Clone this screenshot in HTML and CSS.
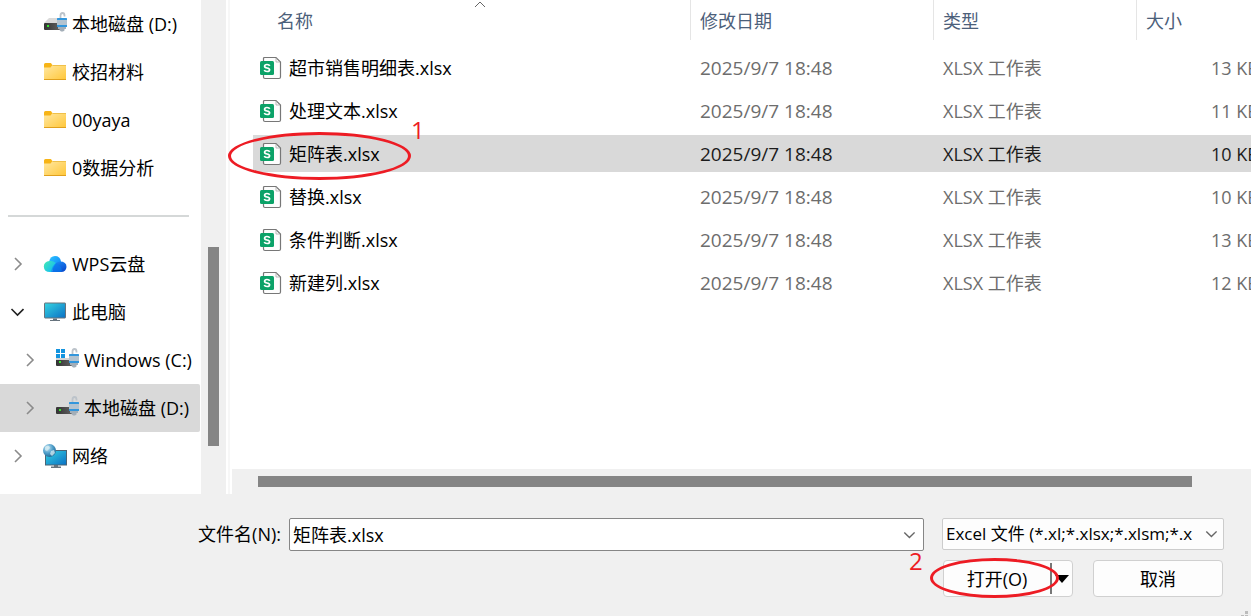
FILE: index.html
```html
<!DOCTYPE html>
<html lang="zh-CN">
<head>
<meta charset="utf-8">
<title>打开文件</title>
<link rel="stylesheet" href="styles.css">
</head>
<body>
<svg class="defs" aria-hidden="true">
  <defs>
    <linearGradient id="g-folder" x1="0" y1="0" x2="1" y2="1"><stop offset="0" stop-color="#ffe8a3"/><stop offset="1" stop-color="#ffc73a"/></linearGradient>
    <linearGradient id="g-screen" x1="0" y1="0" x2="1" y2="1"><stop offset="0" stop-color="#36d5e2"/><stop offset="1" stop-color="#0a6fc4"/></linearGradient>
    <linearGradient id="g-cloud-l" x1="0" y1="0.2" x2="1" y2="1"><stop offset="0" stop-color="#3fe6b8"/><stop offset="1" stop-color="#0ab4ff"/></linearGradient>
    <linearGradient id="g-cloud-t" x1="0" y1="0" x2="1" y2="1"><stop offset="0" stop-color="#2cc4ff"/><stop offset="1" stop-color="#0a7cf5"/></linearGradient>
    <linearGradient id="g-cloud-r" x1="0.2" y1="0" x2="0.8" y2="1"><stop offset="0" stop-color="#1d8cf8"/><stop offset="1" stop-color="#0848cc"/></linearGradient>
    <linearGradient id="g-drive" x1="0" y1="0" x2="1" y2="0"><stop offset="0" stop-color="#333"/><stop offset="1" stop-color="#666"/></linearGradient>
    <radialGradient id="g-globe" cx="0.35" cy="0.3" r="0.75"><stop offset="0" stop-color="#c9e9f5"/><stop offset="0.55" stop-color="#4d9dc9"/><stop offset="1" stop-color="#22648f"/></radialGradient>
    <symbol id="folder" viewBox="0 0 24 24">
      <path d="M1 4.500Q1 3 2.500 3H7.500Q8.500 3 8.500 4L9.500 5V8H1Z" fill="#f7b416"/>
      <path d="M1 7.500H7.500L9.500 5H23V19.500H1Z" fill="url(#g-folder)"/>
      <path d="M1 19.500H23" stroke="#e0a01d"/><path d="M9.500 5.500H23" stroke="#efc04a"/>
    </symbol>
    <symbol id="lock" viewBox="0 0 24 24">
      <path d="M17.500 7V3.500Q17.500 1 19.500 1Q21.500 1 21.500 3.500V4.500" fill="none" stroke="#bcc3ca" stroke-width="1.800"/>
      <path d="M15 14H23V17H21.500V18.500L20 19.500H18L16.500 18V17H15Z" fill="#a3aeb8"/>
      <rect x="14" y="6" width="10" height="9" rx=".5" fill="#3296dc"/>
      <rect x="14" y="8" width="10" height="5" fill="#b3c3d0"/>
    </symbol>
    <symbol id="drive" viewBox="0 0 24 24">
      <path d="M6 6H17L20 11H1Z" fill="#dadada"/>
      <rect x="1" y="11" width="18" height="7" rx="1" fill="url(#g-drive)"/>
      <rect x="4" y="13" width="2" height="2" fill="#35e52c"/>
      <use href="#lock"/>
    </symbol>
    <symbol id="windrive" viewBox="0 0 24 24">
      <rect x="1" y="11" width="18" height="7" rx="1" fill="url(#g-drive)"/>
      <rect x="1" y="10" width="18" height="2" fill="#d3d3d3"/>
      <rect x="4" y="13" width="2" height="2" fill="#35e52c"/>
      <path d="M1 1H5V5H1ZM6 1H10V5H6ZM1 6H5V10H1ZM6 6H10V10H6Z" fill="#1394df"/>
      <use href="#lock"/>
    </symbol>
    <symbol id="cloud" viewBox="0 0 24 24">
      <path d="M6 10Q7 4 12 4Q17 4 18 9.500L15 18H7Z" fill="url(#g-cloud-t)"/>
      <path d="M9 20Q11 10 17 9.500Q23.500 9.500 23.500 15Q23 20 18 20Z" fill="url(#g-cloud-r)"/>
      <path d="M6.500 9Q10 8.500 13 11Q9.500 15 9 20H7Q1 20 .8 14.500Q1 9.500 6.500 9Z" fill="url(#g-cloud-l)"/>
      <path d="M13 11L18 15Q20 20 17 20H8Q9 14 13 11Z" fill="#087df2" opacity=".6"/>
    </symbol>
    <symbol id="pc" viewBox="0 0 24 24">
      <rect x="1.500" y="3" width="21" height="15" rx=".5" fill="url(#g-screen)" stroke="#69727b"/>
      <path d="M10 18.500H14V20H10ZM7 20H17V21H7Z" fill="#66737d"/>
    </symbol>
    <symbol id="network" viewBox="0 0 24 24">
      <rect x="2.500" y="6.500" width="21" height="14.500" fill="url(#g-screen)" stroke="#4b6474"/>
      <path d="M11 21H15V23H11ZM8 22.500H18V24H8Z" fill="#66737d"/>
      <circle cx="6.500" cy="6.500" r="6.500" fill="url(#g-globe)"/>
      <path d="M2 3Q4 1 6 2L7 4L4 7L2 6ZM8 7L11 6L12 9L9 12L7 10Z" fill="#d8eef3" opacity=".75"/>
    </symbol>
    <symbol id="sheet" viewBox="0 0 22 24">
      <path d="M3.500 3V2.500Q3.500 1.500 4.500 1.500H16L20.500 6V21Q20.500 22.500 19 22.500H5Q3.500 22.500 3.500 21Z" fill="#fdfdfd" stroke="#777" stroke-width="1.200"/>
      <path d="M16 2V6H20" fill="none" stroke="#aaa" stroke-width=".8"/>
      <rect y="5" width="14" height="14" rx="1.500" fill="#0ba268"/>
      <path d="M9.700 9.900Q9.200 8.500 7 8.500Q4.600 8.500 4.600 10.200Q4.600 11.600 7 12Q9.600 12.400 9.600 13.800Q9.600 15.500 7.100 15.500Q4.800 15.500 4.300 14" fill="none" stroke="#fff" stroke-width="1.700"/>
    </symbol>
    <symbol id="right" viewBox="0 0 14 14"><path d="M5 1L11 7L5 13" fill="none" stroke="#8b8b8b" stroke-width="1.600"/></symbol>
    <symbol id="down" viewBox="0 0 14 14"><path d="M1.500 4L7.500 10L13.500 4" fill="none" stroke="currentColor" stroke-width="1.600"/></symbol>
  </defs>
</svg>

<div class="dialog">
  <div class="browser">
    <nav class="sidebar" aria-label="位置">
      <a class="place" href="#"><span class="twist"></span><svg class="icon"><use href="#drive"/></svg>本地磁盘 (D:)</a>
      <a class="place" href="#"><span class="twist"></span><svg class="icon"><use href="#folder"/></svg>校招材料</a>
      <a class="place" href="#"><span class="twist"></span><svg class="icon"><use href="#folder"/></svg>00yaya</a>
      <a class="place" href="#"><span class="twist"></span><svg class="icon"><use href="#folder"/></svg>0数据分析</a>
      <hr class="divider">
      <a class="place" href="#"><svg class="twist"><use href="#right"/></svg><svg class="icon"><use href="#cloud"/></svg>WPS云盘</a>
      <a class="place" href="#"><svg class="twist"><use href="#down"/></svg><svg class="icon"><use href="#pc"/></svg>此电脑</a>
      <a class="place child" href="#"><svg class="twist"><use href="#right"/></svg><svg class="icon"><use href="#windrive"/></svg>Windows (C:)</a>
      <a class="place child current" href="#"><svg class="twist"><use href="#right"/></svg><svg class="icon"><use href="#drive"/></svg>本地磁盘 (D:)</a>
      <a class="place" href="#"><svg class="twist"><use href="#right"/></svg><svg class="icon"><use href="#network"/></svg>网络</a>
    </nav>
    <div class="vscroll"><div class="vthumb"></div></div>
    <div class="splitter"></div>
    <main class="files">
      <table class="list">
        <colgroup><col><col class="c-date"><col class="c-type"><col class="c-size"></colgroup>
        <thead>
          <tr>
            <th><div class="head first">名称<svg class="sort" viewBox="0 0 14 8"><path d="M2 7L7 2L12 7" fill="none" stroke="#666"/></svg></div></th>
            <th><div class="head">修改日期</div></th>
            <th><div class="head">类型</div></th>
            <th><div class="head">大小</div></th>
          </tr>
        </thead>
        <tbody>
          <tr><td class="name"><div class="file"><svg class="sheet"><use href="#sheet"/></svg>超市销售明细表.xlsx</div></td><td class="date">2025/9/7 18:48</td><td>XLSX 工作表</td><td class="size">13 KB</td></tr>
          <tr><td class="name"><div class="file"><svg class="sheet"><use href="#sheet"/></svg>处理文本.xlsx</div></td><td class="date">2025/9/7 18:48</td><td>XLSX 工作表</td><td class="size">11 KB</td></tr>
          <tr class="selected"><td class="name"><div class="file"><svg class="sheet"><use href="#sheet"/></svg>矩阵表.xlsx<span class="ring ring-file"></span><span class="step step-file">1</span></div></td><td class="date">2025/9/7 18:48</td><td>XLSX 工作表</td><td class="size">10 KB</td></tr>
          <tr><td class="name"><div class="file"><svg class="sheet"><use href="#sheet"/></svg>替换.xlsx</div></td><td class="date">2025/9/7 18:48</td><td>XLSX 工作表</td><td class="size">10 KB</td></tr>
          <tr><td class="name"><div class="file"><svg class="sheet"><use href="#sheet"/></svg>条件判断.xlsx</div></td><td class="date">2025/9/7 18:48</td><td>XLSX 工作表</td><td class="size">13 KB</td></tr>
          <tr><td class="name"><div class="file"><svg class="sheet"><use href="#sheet"/></svg>新建列.xlsx</div></td><td class="date">2025/9/7 18:48</td><td>XLSX 工作表</td><td class="size">12 KB</td></tr>
        </tbody>
      </table>
      <div class="hscroll"><div class="hthumb"></div></div>
    </main>
  </div>

  <form class="footer">
    <div class="row">
      <label class="label" for="filename">文件名(N):</label>
      <div class="combo">
        <input id="filename" type="text" value="矩阵表.xlsx">
        <button class="drop" type="button" aria-label="展开"><svg class="chev"><use href="#down"/></svg></button>
      </div>
      <div class="filter">
        <select aria-label="文件类型"><option>Excel 文件 (*.xl;*.xlsx;*.xlsm;*.x</option></select>
        <svg class="chev"><use href="#down"/></svg>
      </div>
    </div>
    <div class="row actions">
      <div class="split">
        <button class="open" type="button">打开(O)</button>
        <button class="more" type="button" aria-label="更多打开方式"><svg class="tri" viewBox="0 0 14 8"><path d="M0 0H14L7 8Z"/></svg></button>
        <span class="ring ring-open"></span><span class="step step-open">2</span>
      </div>
      <button class="cancel" type="button">取消</button>
    </div>
    <svg class="grip" viewBox="0 0 10 6"><path d="M4 1H7V4H4ZM0 5H3V6H0ZM4 5H7V6H4Z" fill="#bcbcbc"/></svg>
  </form>
</div>
</body>
</html>
```
FILE: styles.css
```css
* { box-sizing: border-box; }
html { overflow: hidden; }
body {
  margin: 0;
  background: #f0f0f0;
  color: #000;
  font: 18px/24px "Open Sans", "Noto Sans CJK SC", sans-serif;
}
input, select, button { font: inherit; color: inherit; margin: 0; }
.defs { position: absolute; width: 0; height: 0; }

.dialog { min-height: 100vh; display: flex; flex-direction: column; position: relative; overflow: hidden; }
.browser { display: flex; background: #fff; }

.sidebar { width: 201px; flex: none; padding-bottom: 14px; }
.place {
  display: flex;
  align-items: center;
  height: 48px;
  margin-right: 1px;
  padding-left: 10px;
  color: #000;
  text-decoration: none;
  white-space: nowrap;
}
.place.child { padding-left: 22px; }
.current { background: #d9d9d9; border-radius: 0 2px 2px 0; }
.twist { width: 14px; height: 14px; margin-right: 19px; flex: none; color: #222; }
.icon { width: 24px; height: 24px; margin-right: 5px; flex: none; }
.divider { height: 2px; margin: 23px 12px 23px 8px; border: 0; background: #d5d8d8; }

.vscroll { width: 25px; flex: none; padding: 247px 7px 48px; background: #f0f0f0; }
.vthumb { height: 100%; background: #858585; }
.splitter { width: 6px; flex: none; border: solid #fff; border-width: 0 2px; background: #f7f7f7; }

.files { flex: 1; min-width: 0; display: flex; flex-direction: column; justify-content: space-between; }
.list {
  width: calc(100% - 21px);
  margin-left: 21px;
  table-layout: fixed;
  border-spacing: 0;
  white-space: nowrap;
  color: #6d6d6d;
}
.c-date { width: 243px; }
.c-type { width: 203px; }
.c-size { width: 115px; }
th { padding: 0 0 6px; font-weight: 400; text-align: left; color: #4c607a; }
.head { position: relative; height: 40px; padding: 9px 9px 0; border-left: 1px solid #e5e5e5; }
.head.first { padding-left: 24px; border-left: 0; }
.sort { position: absolute; top: 0; left: 16px; right: 0; margin: 0 auto; width: 14px; height: 8px; }
td {
  height: 43px;
  padding: 0 0 0 10px;
  border: solid transparent;
  border-width: 3px 0;
  background-clip: padding-box;
}
.name { padding-left: 7px; color: #000; }
.file { position: relative; display: flex; align-items: center; height: 37px; }
.date { font-size: 19px; }
.size { padding-left: 75px; }
.sheet { width: 22px; height: 24px; margin-right: 7px; flex: none; }
.selected td { background-color: #d9d9d9; color: #1c1c1c; }
.selected .name { color: #000; }

.hscroll { padding: 7px 59px 7px 26px; background: #f0f0f0; }
.hthumb { height: 11px; background: #858585; }

.footer { flex: 1; padding: 24px 27px 19px 0; }
.row { display: flex; }
.label { width: 289px; flex: none; padding: 4px 8px 0 0; text-align: right; }
.combo {
  flex: 1;
  min-width: 0;
  display: flex;
  height: 33px;
  margin-right: 18px;
  border: 1px solid #868686;
  border-radius: 2px;
  background: #fff;
}
.combo input { flex: 1; min-width: 0; padding: 0 3px; border: 0; background: none; outline: 0; }
.drop { width: 28px; padding: 0; border: 0; background: none; display: grid; place-items: center; }
.chev { width: 12px; height: 12px; color: #666; }
.filter { position: relative; width: 282px; height: 32px; flex: none; }
.filter select {
  width: 100%;
  height: 100%;
  padding: 0 24px 0 3px;
  font-size: 17px;
  appearance: none;
  border: 1px solid #ccc;
  border-radius: 2px;
  background: #fdfdfd;
}
.filter .chev { position: absolute; right: 7px; top: 10px; pointer-events: none; }
.actions { justify-content: flex-end; gap: 20px; margin-top: 9px; padding-right: 1px; }
.split, .cancel { width: 130px; height: 37px; border: 1px solid #d0d0d0; border-radius: 4px; background: #fdfdfd; }
.split { position: relative; display: flex; align-items: center; }
.open { flex: 1; height: 31px; padding: 0; border: 0; border-right: 2px solid #777; background: none; }
.more { width: 20px; padding: 0; border: 0; background: none; display: grid; place-items: center; }
.tri { width: 14px; height: 8px; }
.cancel { padding: 0; }
.grip { position: absolute; right: 0; bottom: 0; width: 10px; height: 6px; }

.ring { position: absolute; border: 3px solid #ed1c24; border-radius: 50%; pointer-events: none; }
.ring-file { left: -32px; top: -3px; width: 183px; height: 48px; }
.ring-open { left: -14px; top: -3px; width: 129px; height: 40px; }
.step { position: absolute; color: #ed1c24; font-size: 24px; line-height: 24px; }
.step-file { left: 151px; top: -17px; }
.step-open { left: -35px; top: -12px; }
```
